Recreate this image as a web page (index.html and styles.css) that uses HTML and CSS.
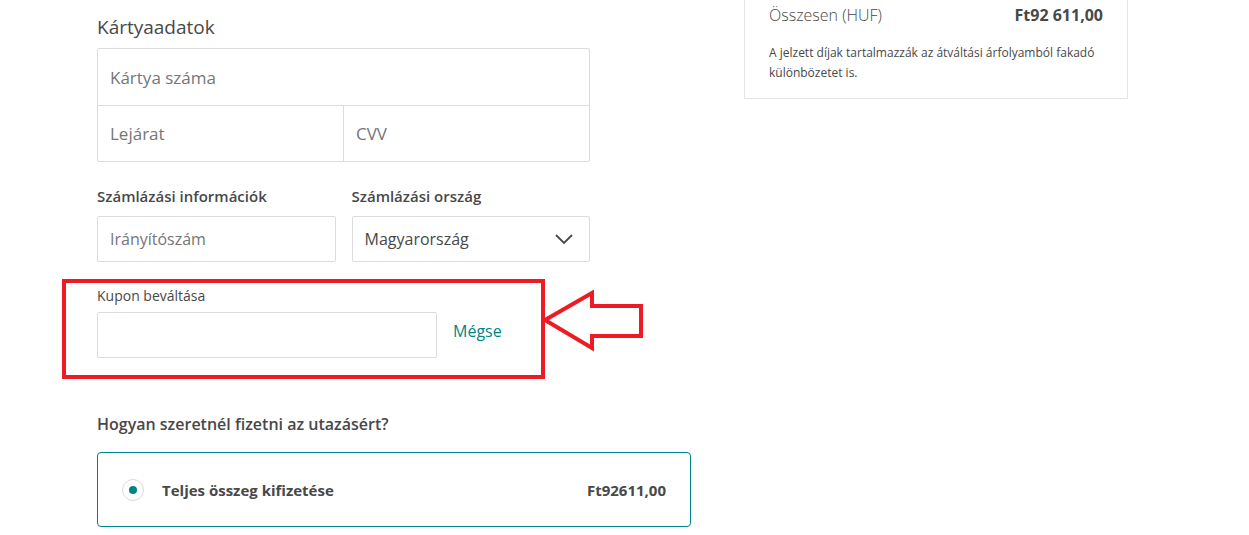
FILE: index.html
```html
<!DOCTYPE html>
<html lang="hu">
<head>
    <meta charset="UTF-8">
    <meta name="viewport" content="width=device-width, initial-scale=1.0">
    <title>Fizetés</title>
    <link rel="stylesheet" href="styles.css">
</head>
<body>
    <div class="page">
        <div class="form-col">
            <h3 class="section-title">Kártyaadatok</h3>
            <div class="card-box">
                <div class="card-row">
                    <div class="field">Kártya száma</div>
                </div>
                <div class="card-row split">
                    <div class="field">Lejárat</div>
                    <div class="field">CVV</div>
                </div>
            </div>

            <div class="billing">
                <div class="billing-item">
                    <div class="label">Számlázási információk</div>
                    <div class="input">Irányítószám</div>
                </div>
                <div class="billing-item">
                    <div class="label">Számlázási ország</div>
                    <div class="input select">
                        <span>Magyarország</span>
                        <svg width="18" height="10" viewBox="0 0 18 10"><path d="M1 1l8 8 8-8" fill="none" stroke="#484848" stroke-width="1.8"/></svg>
                    </div>
                </div>
            </div>

            <div class="coupon">
                <div class="coupon-label">Kupon beváltása</div>
                <div class="coupon-row">
                    <div class="input coupon-input"></div>
                    <a class="cancel" href="#">Mégse</a>
                </div>
                <!-- annotation from the screenshot -->
                <div class="mark-box"></div>
                <svg class="mark-arrow" width="110" height="70" viewBox="0 0 110 70">
                    <polygon points="5,32 52,5 52,18 101,18 101,48 52,48 52,60" fill="none" stroke="#ed1c24" stroke-width="4"/>
                </svg>
            </div>

            <div class="pay-title">Hogyan szeretnél fizetni az utazásért?</div>
            <div class="pay-option">
                <span class="radio"><span class="dot"></span></span>
                <span class="pay-name">Teljes összeg kifizetése</span>
                <span class="pay-price">Ft92611,00</span>
            </div>
        </div>

        <div class="summary-col">
            <div class="summary">
                <div class="total-row">
                    <span>Összesen (HUF)</span>
                    <b>Ft92 611,00</b>
                </div>
                <p class="note">A jelzett díjak tartalmazzák az átváltási árfolyamból fakadó különbözetet is.</p>
            </div>
        </div>
    </div>
</body>
</html>
```

FILE: styles.css
```css
body {
    margin: 0;
    font-family: 'Open Sans', 'Liberation Sans', sans-serif;
    color: #484848;
    background: #fff;
    overflow: hidden;
}
.page {
    display: flex;
    padding-left: 97px;
    gap: 53px;
}
.form-col {
    width: 594px;
}
.section-title {
    font-size: 19px;
    font-weight: 400;
    margin: 14px 0 8px;
    line-height: 26px;
}
.card-box {
    width: 493px;
    border: 1px solid #dcdcdc;
    border-radius: 2px;
    box-sizing: border-box;
}
.card-row {
    display: flex;
    height: 56px;
}
.card-row + .card-row {
    height: 55px;
    border-top: 1px solid #dcdcdc;
}
.card-row .field {
    flex: 1;
    display: flex;
    align-items: center;
    padding-left: 12px;
    font-size: 17px;
    color: #767676;
}
.split .field + .field {
    border-left: 1px solid #dcdcdc;
}
.billing {
    display: flex;
    gap: 16px;
    width: 493px;
    margin-top: 24px;
}
.billing-item {
    flex: 1;
}
.label {
    font-size: 15px;
    font-weight: 600;
    line-height: 20px;
    margin-bottom: 10px;
}
.input {
    height: 46px;
    border: 1px solid #dcdcdc;
    border-radius: 2px;
    box-sizing: border-box;
    display: flex;
    align-items: center;
    padding: 0 12px;
    font-size: 16px;
    color: #767676;
}
.select {
    justify-content: space-between;
    color: #484848;
    padding-right: 16px;
}
.coupon {
    position: relative;
    margin-top: 24px;
}
.coupon-label {
    font-size: 14px;
    font-weight: 500;
    line-height: 20px;
    margin-bottom: 6px;
}
.coupon-row {
    display: flex;
    align-items: center;
    gap: 16px;
}
.coupon-input {
    width: 340px;
}
.cancel {
    color: #008489;
    text-decoration: none;
    font-size: 16px;
    margin-bottom: 8px;
}
.mark-box {
    position: absolute;
    left: -35px;
    top: -7px;
    width: 483px;
    height: 100px;
    border: 4px solid #ed1c24;
    box-sizing: border-box;
}
.mark-arrow {
    position: absolute;
    left: 443px;
    top: 2px;
}
.pay-title {
    font-size: 16px;
    font-weight: 600;
    line-height: 22px;
    margin-top: 55px;
}
.pay-option {
    margin-top: 17px;
    height: 75px;
    border: 1px solid #008489;
    border-radius: 4px;
    box-sizing: border-box;
    display: flex;
    align-items: center;
    padding: 0 24px;
}
.radio {
    width: 22px;
    height: 22px;
    border: 1px solid #dcdcdc;
    border-radius: 50%;
    box-sizing: border-box;
    display: flex;
    align-items: center;
    justify-content: center;
    margin-right: 18px;
}
.dot {
    width: 8px;
    height: 8px;
    border-radius: 50%;
    background: #008489;
}
.pay-name {
    flex: 1;
    font-size: 15px;
    font-weight: 700;
}
.pay-price {
    font-size: 15px;
    font-weight: 700;
}
.summary-col {
    width: 384px;
}
.summary {
    margin-top: -30px;
    border: 1px solid #e4e4e4;
    padding: 32px 24px 15px;
}
.total-row {
    display: flex;
    justify-content: space-between;
    font-size: 16px;
    line-height: 24px;
}
.total-row span {
    font-weight: 300;
}
.note {
    font-size: 12px;
    line-height: 20px;
    margin: 16px 0 0;
}
```
